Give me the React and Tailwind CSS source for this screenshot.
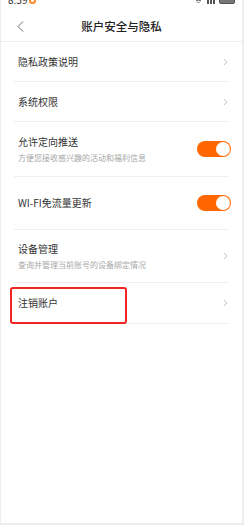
import React from "react";

const font = { fontFamily: '"Noto Sans CJK SC", "Noto Sans", sans-serif' };

function Chevron() {
  return (
    <svg width="5" height="8" viewBox="0 0 5 8" className="mr-[1px]">
      <path d="M1 1 L4 4 L1 7" fill="none" stroke="#c4c4c4" strokeWidth="1" />
    </svg>
  );
}

function Toggle() {
  return (
    <div className="-mr-[2px] flex h-[16px] w-[34px] items-center justify-end rounded-full bg-[#ff6600] p-[1px]">
      <div className="h-[14px] w-[14px] rounded-full bg-white" />
    </div>
  );
}

function Row({ title, sub, right, h, highlight }) {
  return (
    <div className="relative mx-[13px] flex items-center justify-between border-b border-[#efefef] pl-[4px]" style={{ height: h }}>
      <div className="flex flex-col">
        <span className="text-[10px] leading-[14px] text-[#333]">{title}</span>
        {sub && <span className="mt-[3px] text-[8px] leading-[11px] text-[#a8a8a8]">{sub}</span>}
      </div>
      {right === "toggle" ? <Toggle /> : <Chevron />}
      {highlight && (
        <div className="absolute left-[-4px] top-[4px] h-[37px] w-[117px] rounded-[3px] border-2 border-[#f22424]" />
      )}
    </div>
  );
}

export default function App() {
  return (
    <div className="flex h-[525px] w-[244px] bg-[#ededed] pb-[2px] pl-[1px] pr-[2px]" style={font}>
      <div className="flex flex-1 flex-col bg-white">
        <div className="h-[6px] overflow-hidden">
          <div className="-mt-[6px] flex items-center justify-between px-[7px] text-[10px] leading-[12px] text-[#333]">
            <div className="flex items-center gap-[2px]">
              <span>8:59</span>
              <span className="h-[7px] w-[7px] rounded-full border-2 border-[#ff8a2a]" />
            </div>
            <div className="flex items-center gap-[4px]">
              <svg width="9" height="7" viewBox="0 0 9 7">
                <path d="M0.5 2.5 Q4.5 -1 8.5 2.5 M2 4 Q4.5 2 7 4 M3.5 5.5 Q4.5 4.8 5.5 5.5" fill="none" stroke="#555" strokeWidth="1" />
              </svg>
              <div className="flex items-end gap-[1px]">
                <span className="h-[4px] w-[2px] bg-[#555]" />
                <span className="h-[6px] w-[2px] bg-[#555]" />
                <span className="h-[8px] w-[2px] bg-[#555]" />
              </div>
              <span className="h-[8px] w-[16px] rounded-[2px] border border-[#555] bg-[#777]" />
            </div>
          </div>
        </div>
        <div className="relative flex h-[36px] items-center justify-center border-b border-[#efefef]">
          <svg width="7" height="11" viewBox="0 0 7 11" className="absolute left-[16px] top-[15px]">
            <path d="M6 0.5 L1 5.5 L6 10.5" fill="none" stroke="#666" strokeWidth="1" />
          </svg>
          <span className="mt-[6px] text-[11.5px] font-medium text-[#222]">账户安全与隐私</span>
        </div>
        <Row title="隐私政策说明" h={40} />
        <Row title="系统权限" h={40} />
        <Row title="允许定向推送" sub="方便您接收感兴趣的活动和福利信息" right="toggle" h={55} />
        <Row title="WI-FI免流量更新" right="toggle" h={53} />
        <Row title="设备管理" sub="查询并管理当前账号的设备绑定情况" h={53} />
        <Row title="注销账户" h={41} highlight />
      </div>
    </div>
  );
}
